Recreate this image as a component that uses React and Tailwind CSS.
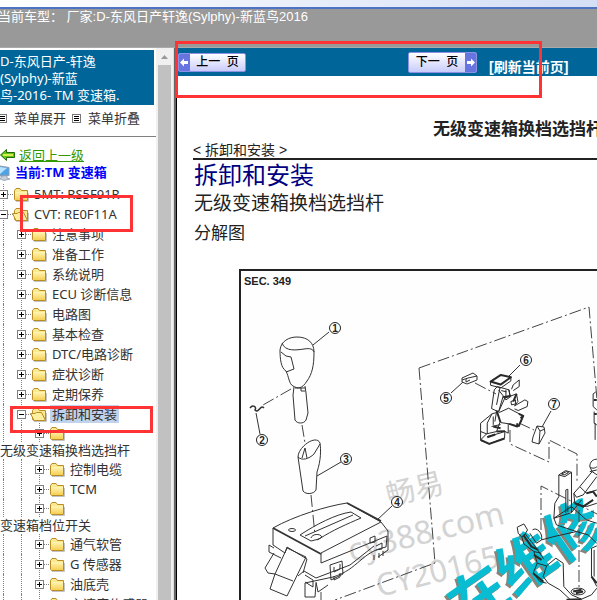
import React from "react";

const treeItems = [
  { label: "5MT: RS5F91R", level: 0 },
  { label: "CVT: RE0F11A", level: 0, open: true },
  { label: "注意事项", level: 1 },
  { label: "准备工作", level: 1 },
  { label: "系统说明", level: 1 },
  { label: "ECU 诊断信息", level: 1 },
  { label: "电路图", level: 1 },
  { label: "基本检查", level: 1 },
  { label: "DTC/电路诊断", level: 1 },
  { label: "症状诊断", level: 1 },
  { label: "定期保养", level: 1 },
  { label: "拆卸和安装", level: 1, open: true, selected: true },
  { label: "无级变速箱换档选挡杆", level: 2, wrapped: true },
  { label: "控制电缆", level: 2 },
  { label: "TCM", level: 2 },
  { label: "变速箱档位开关", level: 2, wrapped: true },
  { label: "通气软管", level: 2 },
  { label: "G 传感器", level: 2 },
  { label: "油底壳", level: 2 },
  { label: "主速度传感器", level: 2 },
];

function Guide() {
  return (
    <span className="flex w-[18px] shrink-0 justify-center self-stretch">
      <span className="border-l border-dotted border-[#808080]" />
    </span>
  );
}

function Toggle({ open }) {
  return (
    <svg className="h-5 w-[18px] shrink-0" viewBox="0 0 18 20" shapeRendering="crispEdges" aria-hidden="true">
      <path d="M9.5 0V20M14 10.500H18" fill="none" stroke="#808080" strokeDasharray="1 1" />
      <rect x="5.500" y="6.500" width="8" height="8" fill="#fff" stroke="#808080" />
      <path d={open ? "M7 10.500H12" : "M7 10.500H12M9.500 8V13"} stroke="#000" fill="none" />
    </svg>
  );
}

function Folder({ open }) {
  return (
    <svg className="h-5 w-5 shrink-0" viewBox="0 0 20 20" aria-hidden="true">
      <path d="M0 10.500H3" stroke="#808080" strokeDasharray="1 1" />
      <path d="M4 17.500H16.500V9" stroke="#c4c4c4" fill="none" />
      <path d="M2.500 15.500V6.500L4 4.500H8L9.500 6.500H15.500V16.500H3.500Z" fill="#fbe98f" stroke="#b98c25" />
      {open ? (
        <path d="M4 16.500L0.500 9.500H5L6.500 8.500H11.500L15.500 16.500Z" fill="#fff0a0" stroke="#b98c25" />
      ) : (
        <path d="M3 8H15V16H3Z" fill="url(#folderFace)" />
      )}
    </svg>
  );
}

function TreeRow({ item }) {
  return (
    <li>
      <div className={`-ml-1.5 flex items-center ${item.wrapped ? "h-[18px]" : "h-5"}`}>
        {item.level > 0 && <Guide />}
        {item.level > 1 && <Guide />}
        <Toggle open={item.open} />
        <Folder open={item.open} />
        {!item.wrapped && (
          <a
            href="#item"
            className={`px-0.5 leading-[18px] whitespace-nowrap ${item.selected ? "bg-[#c0d2ec]" : ""}`}
          >
            {item.label}
          </a>
        )}
      </div>
      {item.wrapped && (
        <a href="#item" className="block leading-[17px] whitespace-nowrap">
          {item.label}
        </a>
      )}
    </li>
  );
}

function ListIcon() {
  return (
    <svg className="h-[9px] w-[9px] shrink-0" viewBox="0 0 9 9" shapeRendering="crispEdges" aria-hidden="true">
      <rect x="0.500" y="0.500" width="8" height="8" fill="#fff" stroke="#777" />
      <path d="M2 2.500H7M2 4.500H7M2 6.500H7" stroke="#000" />
    </svg>
  );
}

function Sidebar() {
  return (
    <aside className="flex w-[177px] shrink-0 overflow-hidden">
      <div className="w-[156px] overflow-hidden pt-0.5 text-[13px] text-[#333]">
        <h1 className="mr-0.5 h-[55px] bg-[#006699] pt-[3px] leading-[17px] whitespace-nowrap text-white">
          D-东风日产-轩逸
          <br />
          (Sylphy)-新蓝
          <br />
          鸟-2016- TM 变速箱.
        </h1>
        <div className="flex h-8 items-center border-b border-[#808080] pb-1">
          <button className="-ml-0.5 flex items-center gap-[7px]">
            <ListIcon />
            菜单展开
          </button>
          <button className="ml-1.5 flex items-center gap-[7px]">
            <ListIcon />
            菜单折叠
          </button>
        </div>
        <a href="#up" className="mt-[9px] flex h-[18px] items-center gap-1 text-[#339900]">
          <svg className="h-[14px] w-[15px]" viewBox="0 0 15 14" aria-hidden="true">
            <path d="M0.500 7L6.500 1.500V4.500H14.500V9.500H6.500V12.500Z" fill="#62c51c" stroke="#236b09" />
            <path d="M3 7H13" stroke="#d7ed4b" strokeWidth="2" />
          </svg>
          <span className="leading-4 underline">返回上一级</span>
        </a>
        <div className="flex h-[18px] items-center gap-1 font-bold whitespace-nowrap text-[#0000ff]">
          <svg className="h-4 w-[11px]" viewBox="0 0 11 16" aria-hidden="true">
            <path d="M0 1L9 2.500V10.500L0 11Z" fill="#4da2e8" stroke="#8c9caf" />
            <path d="M0 2L7 3L0 9Z" fill="#b9e2fc" />
            <path d="M2 11L7 10.500V13L10 14L4 15.500L0 14Z" fill="#c6cfdb" stroke="#8794a5" strokeWidth="0.700" />
          </svg>
          当前:TM 变速箱
        </div>
        <svg className="absolute h-0 w-0" aria-hidden="true">
          <linearGradient id="folderFace" x2="0" y2="1">
            <stop stopColor="#fff5b4" />
            <stop offset="1" stopColor="#f6cf54" />
          </linearGradient>
        </svg>
        <ul className="mt-0.5">
          {treeItems.map((item) => (
            <TreeRow key={item.label} item={item} />
          ))}
        </ul>
      </div>
      <div className="flex w-[17px] flex-col bg-[#f0f0f0] px-0.5">
        <svg className="h-[17px] w-[13px] shrink-0" viewBox="0 0 13 17" aria-hidden="true">
          <path d="M3 11L6.500 7L10 11Z" fill="#999" />
        </svg>
        <div className="flex-1 bg-[#c1c1c1]" />
      </div>
      <div className="w-1 border-r border-l border-r-black border-l-[#ddd] bg-[#666]" />
    </aside>
  );
}

function PageArrow({ next }) {
  return (
    <span className="flex h-full w-[11px] items-center justify-center bg-[#6675df]">
      <svg className="h-[9px] w-[9px]" viewBox="0 0 9 9" aria-hidden="true">
        <path
          d={next ? "M9 4.500L5 0.500V3H1V6H5V8.500Z" : "M0 4.500L4 0.500V3H8V6H4V8.500Z"}
          fill="#fff"
        />
      </svg>
    </span>
  );
}

function PageBar() {
  return (
    <nav className="flex h-7 items-center bg-[#006699] pl-px">
      <button className="flex h-[19px] w-[68px] shrink-0 items-center overflow-hidden rounded-xs border border-[#8e92e4] bg-linear-to-b from-white to-[#c9ccfa] text-[12px] font-medium text-black">
        <PageArrow />
        <span className="flex-1 whitespace-pre">上一  页</span>
      </button>
      <button className="ml-[162px] flex h-[21px] w-[69px] shrink-0 items-center overflow-hidden rounded-xs border border-[#8e92e4] bg-linear-to-b from-white to-[#c9ccfa] text-[12px] font-medium text-black">
        <span className="flex-1 whitespace-pre">下一  页</span>
        <PageArrow next />
      </button>
      <a href="#refresh" className="ml-3 pt-2.5 text-[14px] leading-4 font-bold whitespace-nowrap text-white">
        [刷新当前页]
      </a>
    </nav>
  );
}

const callouts = [
  [1, 335, 328],
  [2, 262, 440],
  [3, 346, 459],
  [4, 397, 502],
  [5, 446, 398],
  [6, 526, 360],
  [7, 554, 404],
];

function ExplodedView() {
  return (
    <svg
      className="ml-[62px] block h-[400px] w-[640px] max-w-none"
      viewBox="239 269 640 400"
      role="img"
      aria-label="分解图"
    >
      <rect x="240" y="270" width="620" height="440" fill="#fefefe" stroke="#222" strokeWidth="2" />
      <text x="244" y="285" className="text-[11px] font-bold" fill="#222">SEC. 349</text>

      <g fill="#d3d3d3" className="font-['Noto_Sans','Noto_Sans_CJK_SC',sans-serif]">
        <text transform="translate(389 506) rotate(-14)" className="text-[29px]">畅易</text>
        <text transform="translate(351 562) rotate(-14)" className="text-[32px]">cy388.com</text>
        <text transform="translate(379 597) rotate(-14)" className="text-[31px]">CY20165</text>
      </g>

      <g className="text-[58px] font-bold">
        <text transform="translate(465 632) rotate(-35)" fill="#8d8276">在维修</text>
        <text transform="translate(467 630) rotate(-35)" fill="#08bdd2">在维修</text>
      </g>

      <g fill="none" stroke="#444" strokeWidth="1" strokeDasharray="12 3 2 3">
        <path d="M419 368L589 307L597 400M419 368L435 563L335 600" />
        <path d="M291 389L263 405M302 425L305 443M311 495L315 535M321 592V610" />
        <path d="M475 383L496 394M519 423L534 430M510 430V444L549 462V440L577 454V481" />
        <path d="M541 530V486L597 514M579 510V588" />
      </g>

      <g fill="none" stroke="#333" strokeWidth="1" strokeLinejoin="round">
        <path d="M329 332L313 345M260 434L256 413M341 462L317 476M392 506L377 520M451 393L463 382M520 365L508 377M551 411L542 427" />

        <path d="M280 350C281 341 289 337 297 337C308 337 314 343 314 352C314 366 312 374 307 381C302 389 298 389 293 386C289 384 289 377 286 371C281 368 280 359 280 350Z" />
        <path d="M282 343C285 352 297 350 304 349C310 348 313 349 314 352M281 352L286 356L291 357L294 369L286 372" />
        <path d="M294 387L293 395L295 420C297 424 304 424 306 420L308 413L306 393L305 386M295 388H305M301 388V391H305" />
        <path d="M250 408C253 404 257 407 255 410C259 414 260 404 264 408" strokeWidth="1.500" />

        <path d="M298 457L303 491C306 495 314 494 316 490L317 472C321 460 321 450 320 443C316 434 298 447 298 457C302 461 309 459 314 454L320 444M302 458L305 448L307 458" />

        <path d="M273 528C294 516 327 506 347 503L381 522L321 553V563L387 536L386 547C361 552 359 569 333 577L305 583V597H315L316 583" />
        <path d="M273 528L321 554M347 503L381 521" strokeWidth="1.800" />
        <path d="M300 535C315 525 336 514 351 512L361 518C347 524 333 530 319 539L311 541ZM305 536L353 515M311 538C312 534 320 533 322 537L317 540" />
        <ellipse cx="292" cy="530" rx="3.500" ry="1.500" />
        <path d="M273 528V545L285 553L287 547L307 559L303 573M381 522L388 531V550L378 557M269 545V552L281 558M269 545L274 548" />
        <path d="M274 553L265 568L268 573L275 574L287 548L306 557L287 596L270 589L275 574L293 581M298 576L304 571L316 578L350 565L374 546" />
        <path d="M330 565L342 561L343 574L331 580ZM334 567V572L340 569V564M334 576V580L340 577V573M370 538L375 536V542L370 543ZM376 546L382 543V549L376 550M374 555V560M379 553V558M383 551V556M305 575L313 580V587L305 582M316 582L318 592L328 585" />

        <path d="M462 378L473 373L477 376V380L467 384L462 382ZM462 380L468 378L477 376M466 379V382L470 380" />
        <path d="M537 426L544 427L545 433L539 444L532 442L533 437ZM537 426L540 431L545 429M540 431L539 444" />
      </g>

      <g transform="translate(400 290) scale(0.333)" fill="none" stroke="#2a2a2a" strokeWidth="3" strokeLinejoin="round">
        <path d="M283 300L292 290L328 300L330 322L318 330L310 318L296 366L275 356ZM296 300L310 318M300 294L290 345M304 302L320 306M318 300V325M326 300L333 322" />
        <path d="M272 275V286L303 294L333 273V262M335 298L340 285L358 270V290L340 302M316 324L350 312L354 335L344 348M333 335L347 330V342L335 345Z" />
        <path d="M344 348L375 330L384 335L382 350L355 362L344 357M296 366L316 322M298 368L326 355L370 378L356 410L328 402L302 398M296 366L276 372L242 400V450L262 430V400L276 372" />
        <path d="M242 425L260 432L290 425L300 398M262 440L300 430L315 424L314 445L268 462L242 452M280 380V405M290 365L285 395M314 424L325 430V402M275 410L302 404M588 306L580 312V350L591 360M583 365V400L591 405M586 400V450" />
        <path d="M272 275L303 255L333 262L302 284ZM350 312L340 335M356 410L370 378M357 372L370 378L362 385M315 424L290 425M242 450L268 462L314 446M262 442L286 434M310 322L330 318M290 362L302 398M280 410L302 415M328 402L352 410V400M582 330H591M583 372H591" strokeWidth="6" />
      </g>

      <g transform="translate(400 440) scale(0.333)" fill="none" stroke="#2a2a2a" strokeWidth="3" strokeLinejoin="round">
        <path d="M477 105L497 92L515 97V218L462 235L465 190L477 170ZM477 105L495 110L515 97M498 220V150L504 148V216M485 102L500 95L506 98L493 105Z" />
        <path d="M352 262L372 252L383 270L376 282L410 325L432 358M352 262L355 280L366 292L372 312L402 335L425 340M376 282L366 292M398 270C410 260 430 280 425 300L410 310L390 280M425 300L462 290L530 275M462 235L470 255L530 275L565 285L591 310" />
        <path d="M402 335L412 370L400 400L420 425L440 430M412 370L440 378L468 355L490 370L492 440L515 465L545 478L575 465L591 445M440 378L430 410L445 430L480 450L510 478M575 325L591 318M575 325V410L591 440M583 330V410" />
        <path d="M570 80C570 65 580 56 595 58M570 80L577 95L540 140L522 160L530 172L550 165L591 110M522 160L525 190L560 200L591 190M540 140L560 160L591 150M515 218L545 180M462 235L515 200L560 240L591 250" />
        <path d="M570 80C576 88 591 85 595 75M570 95L591 90M577 95L600 110" />
        <path d="M560 160L580 155L591 170M525 190L550 200L580 180M370 285L395 320L415 330M402 345L425 360M400 400L430 425M520 455L545 450M528 460L550 455M575 410L591 430M500 480L545 478" strokeWidth="6" />
        <ellipse cx="535" cy="455" rx="21" ry="10" />
      </g>

      <g className="text-[10px] font-bold" textAnchor="middle">
        {callouts.map(([number, x, y]) => (
          <g key={number}>
            <circle cx={x} cy={y} r="5.500" fill="#fff" stroke="#222" />
            <text x={x} y={y + 4} fill="#222">{number}</text>
          </g>
        ))}
      </g>
    </svg>
  );
}

function Manual() {
  return (
    <main className="min-w-0 flex-1 overflow-hidden bg-white text-[#222]">
      <PageBar />
      <article className="flex flex-col whitespace-nowrap">
        <p className="mt-11 ml-[256px] text-[17px] leading-5 font-bold">无级变速箱换档选挡杆</p>
        <div className="ml-4 border-b-2 border-[#222] pt-0.5 text-[14px] leading-4">&lt; 拆卸和安装 &gt;</div>
        <h2 className="ml-[17px] text-[24px] leading-8 text-[#000080]">拆卸和安装</h2>
        <h3 className="ml-[17px] text-[19px] leading-6">无级变速箱换档选挡杆</h3>
        <h4 className="mt-2 mb-[25px] ml-[17px] text-[17px] leading-5">分解图</h4>
        <ExplodedView />
      </article>
    </main>
  );
}

export default function App() {
  return (
    <div className="relative flex h-screen flex-col overflow-hidden bg-white font-['Liberation_Sans','Noto_Sans_CJK_SC',sans-serif]">
      <header className="h-12 shrink-0 border-b border-[#aaa] bg-[#999] text-[13px] text-white">
        <div className="h-[9px] border-b-2 border-[#4f73c3] bg-linear-to-r from-white to-[#d4def5]" />
        <p className="-ml-0.5 leading-4 whitespace-pre">当前车型： 厂家:D-东风日产轩逸(Sylphy)-新蓝鸟2016</p>
      </header>
      <div className="flex min-h-0 flex-1">
        <div className="flex font-['Noto_Sans','Noto_Sans_CJK_SC',sans-serif]">
          <Sidebar />
        </div>
        <Manual />
      </div>
      <div className="pointer-events-none absolute top-[41px] left-[175px] h-[57px] w-[367px] border-3 border-[#ff3333]" />
      <div className="pointer-events-none absolute top-[195px] left-5 h-[37px] w-[113px] border-3 border-[#ff3333]" />
      <div className="pointer-events-none absolute top-[406px] left-2.5 h-[27px] w-[143px] border-3 border-[#ff3333]" />
    </div>
  );
}
